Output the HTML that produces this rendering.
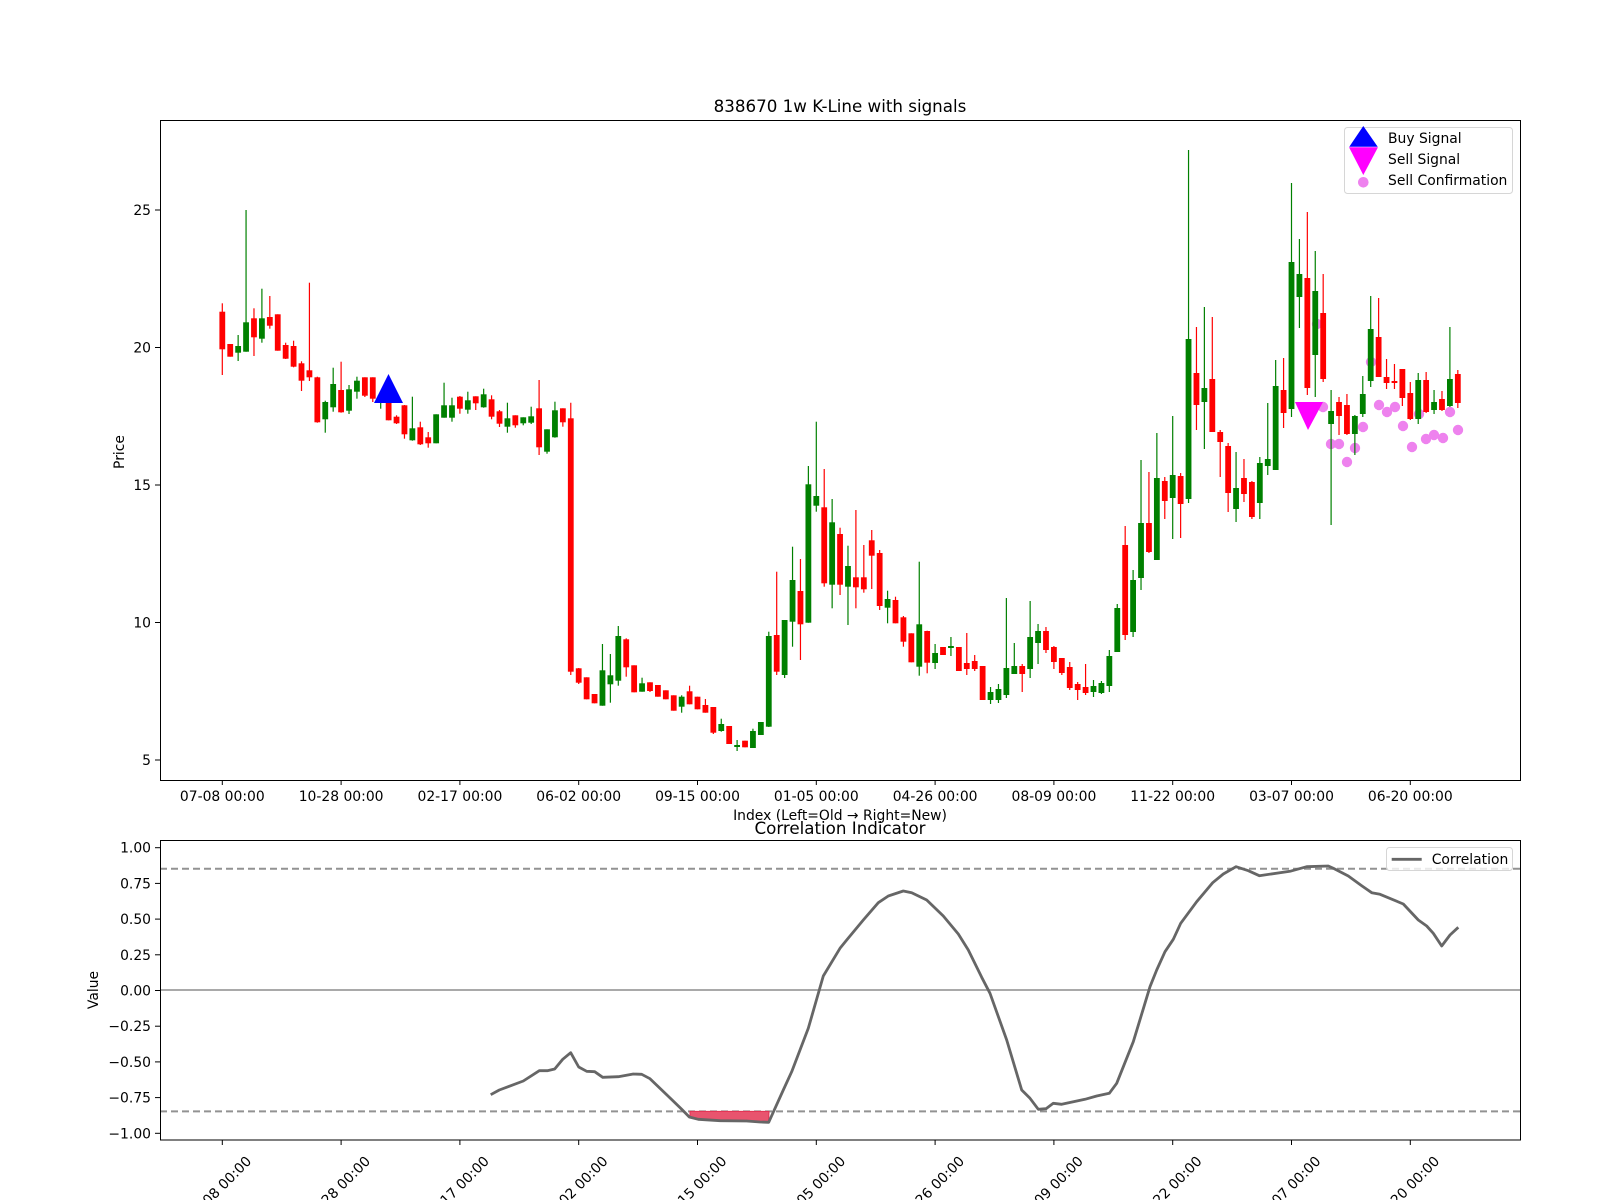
<!DOCTYPE html>
<html><head><meta charset="utf-8">
<style>
html,body{margin:0;padding:0;background:#fff;}
svg{display:block;}
text{font-family:"DejaVu Sans","Liberation Sans",sans-serif;fill:#000;}
</style></head>
<body>
<svg id="s" width="1600" height="1200" viewBox="0 0 1600 1200" xmlns="http://www.w3.org/2000/svg">
<rect width="1600" height="1200" fill="#fff"/>
<g id="conf" fill="#ee82ee"></g>
<g id="candles"></g>
<!-- Buy signal -->
<polygon points="388.5,374 374,403 403,403" fill="#0000ff"/>
<!-- Sell signal -->
<polygon points="1295,402 1323,402 1308,430" fill="#ff00ff"/>
<!-- top axes frame -->
<rect x="160.5" y="120.5" width="1360" height="660" fill="none" stroke="#000" stroke-width="1"/>
<g id="ticks1"></g>
<text x="840" y="112" font-size="16.7" text-anchor="middle">838670 1w K-Line with signals</text>
<text transform="translate(124,452) rotate(-90)" font-size="13.9" text-anchor="middle">Price</text>
<text x="840" y="820" font-size="13.9" text-anchor="middle">Index (Left=Old → Right=New)</text>
<!-- legend top -->
<rect x="1344.5" y="127.5" width="168" height="66" rx="3" fill="#fff" fill-opacity="0.8" stroke="#d6d6d6"/>
<polygon points="1363.3,126 1349.3,146.7 1377.7,146.7" fill="#0000ff"/>
<polygon points="1349,147.3 1378,147.3 1363.3,175" fill="#ff00ff"/>
<circle cx="1363.3" cy="182.3" r="5.3" fill="#ee82ee"/>
<text x="1388" y="143" font-size="13.9">Buy Signal</text>
<text x="1388" y="164" font-size="13.9">Sell Signal</text>
<text x="1388" y="185" font-size="13.9">Sell Confirmation</text>

<!-- bottom axes -->
<line x1="160" y1="990" x2="1520" y2="990" stroke="#a9a9a9" stroke-width="2"/>
<line x1="160" y1="868.7" x2="1520" y2="868.7" stroke="#808080" stroke-width="2" stroke-dasharray="7,4" opacity="0.85"/>
<line x1="160" y1="1111.4" x2="1520" y2="1111.4" stroke="#808080" stroke-width="2" stroke-dasharray="7,4" opacity="0.85"/>
<path id="fillred" fill="#e8546e" stroke="#e23152" stroke-width="1"/>
<polyline id="corr" fill="none" stroke="#666" stroke-width="2.8" stroke-linejoin="round"/>
<rect x="160.5" y="840.5" width="1360" height="299.5" fill="none" stroke="#000" stroke-width="1"/>
<g id="ticks2"></g>
<text x="840" y="834" font-size="16.7" text-anchor="middle">Correlation Indicator</text>
<text transform="translate(98,990) rotate(-90)" font-size="13.9" text-anchor="middle">Value</text>
<rect x="1386.5" y="847.5" width="126" height="23" rx="3" fill="#fff" fill-opacity="0.8" stroke="#d6d6d6"/>
<line x1="1391.7" y1="859.3" x2="1421.7" y2="859.3" stroke="#666" stroke-width="2.8"/>
<text x="1431.7" y="864" font-size="13.9">Correlation</text>
</svg>
<script>
var NS="http://www.w3.org/2000/svg";
function el(t,a,p){var e=document.createElementNS(NS,t);for(var k in a)e.setAttribute(k,a[k]);if(p)p.appendChild(e);return e;}
var D=[
["R",303.3,311.7,349.3,375],["R",344,344,356.7,356.7],["G",335,346,352.7,361],["G",210,322.3,351.7,351.7],
["R",308.3,318.3,337.3,356],["G",288.7,318.3,338.7,342.7],["R",296,317,325.7,328.7],["R",314.3,314.3,350.7,350.7],
["R",342.7,345,358.7,359],["R",340.7,346,366.7,367.3],["R",361.3,363.3,380.7,391],["R",282.7,370.3,377.3,381],
["R",376.7,377.3,422.3,422.7],["G",400.7,402,419.3,432.7],["G",367.7,384,407.3,411.7],["R",361.7,390,412.3,412.7],
["G",385,389.3,410.7,414],["G",376.7,380.7,391.7,398.7],["R",377.3,377.3,395.7,397],["R",377.3,377.3,398.7,402],
["G",394,395.3,401.3,408.7],["R",395.3,395.3,420.3,420.3],["R",415.3,416.7,423.3,424],["R",405,405.3,434.3,438.7],
["G",396.7,428.3,440.3,440.7],["R",421.7,427.3,444.3,445],["R",432,437.3,443.3,447.7],["G",414.3,414.3,443.3,443.3],
["G",382.7,405.3,417.7,417.7],["G",397.7,405.3,417.7,421.7],["R",396,396.7,408.7,413.7],["G",391.7,400.3,409.7,413.7],
["R",396.3,396.3,403.3,410],["G",388.7,394.3,407.3,407.7],["R",395.3,399.3,416.7,419.3],["R",410,411.3,423.7,427],
["G",402.7,418.3,426.7,432.7],["R",415.3,415.3,425.3,427.7],["G",417.3,417.3,423.3,425.3],["G",406.7,416.3,422.7,424],
["R",380,408.3,447.3,455],["G",429.3,429.3,451.7,453.7],["G",401.7,410.3,437.3,437.7],["R",408.3,408.3,422.3,426.7],
["R",402.7,418.3,671.7,675],["R",668,668.3,682.7,684],["R",677.3,677.3,699.3,699.3],["R",694,694,703.3,703.3],
["G",644,670.3,705.7,705.7],["G",654,675.3,684.3,702.7],["G",626,636,680.7,685.7],["R",638.3,639.3,667.3,676.7],
["R",665.3,665.3,692.3,692.3],["G",677.7,683.3,691.7,691.7],["R",682.3,682.3,691,692],["R",685,685,696.7,696.7],
["R",690.3,690.3,699.3,699.3],["R",695.3,695.3,710.7,710.7],["G",695.3,696.7,706.7,712.7],["R",685.7,691.3,704.3,704.3],
["R",696.7,696.7,709.3,709.3],["R",699,705,712.7,712.7],["R",707,707,732.7,734],["G",718.7,724,731,731.7],
["R",726,726,744,744],["G",740,745,747,751],["R",740.7,740.7,747.3,747.3],["G",728.7,731,748,748],
["G",722,722,735,735],["G",631.7,636,726.7,727],["R",571.7,635,671.7,675],["G",620,620,675,678],
["G",546.7,580,621.7,646.7],["R",559,591,624.3,660],["G",466,484.3,622.7,622.7],["G",421.7,496,505.7,511.7],
["R",469,507.3,583.3,586.7],["G",499,522.3,584.7,608.3],["R",527.7,534,584.7,595],["G",545.7,566,586.7,625],
["R",510,577.3,587.3,608.3],["R",545,577.3,589.3,592.7],["R",530,540.3,555.7,589],["R",550,553,606,610],
["G",590.7,599,607.7,623.3],["R",596.7,600,623.3,623.3],["R",616,617.3,641.7,646.7],["R",633.3,633.3,662.3,662.3],
["G",561.7,624.3,666.7,675.7],["R",630.7,631,662.7,673.3],["G",644,653,663,669],["R",647,647,655,655],
["G",637,646,648,656],["R",647,647,671,671],["R",633,663,669,675],["R",655,661,669,671],
["R",666,666,700,700],["G",687,692,700,704],["G",684,689,700,703],["G",598,668,695,698],
["G",643,666,674,674],["R",664,666,674,692],["G",601,637,669,678],["G",624,631,643,664],
["R",627,631,650,653],["R",646,647,662,669],["R",658,658,673,675],["R",662,667,688,690],
["R",682,684,690,700],["R",664,687,693,695],["G",680,686,692,697],["G",681,683,693,694],
["G",650,656,686,692],["G",604,608,652,652],["R",526,545,635,640],["G",570,580,632,637],
["G",460,523,578,590],["R",472,523,552,553],["G",433,478,560,560],["R",477,481,501,519],
["G",416,475,498,539],["R",473,476,504,538],["G",150,339,499,503],["R",327,373,405,430],
["G",307,388,402,449],["R",317,379,432,432],["R",430,432,442,477],["R",443,446,493,512],
["G",452,488,509,522],["R",459,478,494,502],["R",481,482,517,519],["G",457,463,503,519],
["G",403,459,466,475],["G",360,386,470,470],["R",358,390,413,428],["G",183,262,409,417],
["G",239,274,297,328],["R",212,278,388,395],["G",251,291,355,397],["R",274,313,379,382],
["G",390,411,424,525],["R",397,402,416,435],["R",394,405,434,435],["G",415,416,434,455],
["G",376,394,414,417],["G",296,329,381,387],["R",298,337,377,377],["R",359,377,383,389],
["R",364,381,383,389],["R",369,369,398,406],["R",382,393,419,420],["G",373,380,419,424],
["R",372,380,412,413],["G",390,402,410,414],["R",391,399,410,411],["G",327,379,406,407],
["R",370,374,403,408]];
var g=document.getElementById("candles");
D.forEach(function(c,i){var x=222.3+7.92*i;var col=c[0]=="R"?"#ff0000":"#008000";
el("line",{x1:x,x2:x,y1:c[1],y2:c[4],stroke:col,"stroke-width":1.2},g);
var h=Math.max(c[3]-c[2],1.2);
el("rect",{x:x-2.9,y:c[2],width:5.8,height:h,fill:col},g);});
var C=[[1317,324],[1323,407],[1331,444],[1339,444],[1347,462],[1355,448],[1363,427],[1371,362],[1379,405],[1387,412],[1395,407],[1403,426],[1412,447],[1419,414],[1426,439],[1434,435],[1443,438],[1450,412],[1458,430]];
var cg=document.getElementById("conf");
C.forEach(function(p){el("circle",{cx:p[0],cy:p[1],r:5.2},cg);});
var t1=document.getElementById("ticks1");
var labs=["07-08 00:00","10-28 00:00","02-17 00:00","06-02 00:00","09-15 00:00","01-05 00:00","04-26 00:00","08-09 00:00","11-22 00:00","03-07 00:00","06-20 00:00"];
var t2=document.getElementById("ticks2");
labs.forEach(function(l,k){var x=222.3+118.8*k;
el("line",{x1:x,x2:x,y1:780,y2:785,stroke:"#000","stroke-width":1},t1);
var t=el("text",{x:x,y:801,"font-size":13.9,"text-anchor":"middle"},t1);t.textContent=l;
el("line",{x1:x,x2:x,y1:1140,y2:1145,stroke:"#000","stroke-width":1},t2);
var t3=el("text",{transform:"translate("+x+",1192) rotate(-45)","font-size":13.9,"text-anchor":"middle"},t2);t3.textContent=l;});
[5,10,15,20,25].forEach(function(v){var y=760-(v-5)*27.5;
el("line",{x1:155,x2:160,y1:y,y2:y,stroke:"#000","stroke-width":1},t1);
var t=el("text",{x:151,y:y+5,"font-size":13.9,"text-anchor":"end"},t1);t.textContent=v;});
[1,0.75,0.5,0.25,0,-0.25,-0.5,-0.75,-1].forEach(function(v){var y=990.5-142.8*v;
el("line",{x1:155,x2:160,y1:y,y2:y,stroke:"#000","stroke-width":1},t2);
var s=v.toFixed(2).replace("-","\u2212");
var t=el("text",{x:151,y:y+5,"font-size":13.9,"text-anchor":"end"},t2);t.textContent=s;});
var P=[[490.7,1094.7],[499.3,1090],[523.3,1081],[539.3,1070.7],[547.3,1070.7],[554.7,1069],[562.7,1059.3],[570.7,1052.7],[578.7,1067],[586.7,1071.3],[594.7,1071.7],[602.7,1077.3],[618.3,1076.7],[633.3,1074],[641.7,1074.3],[650,1078.7],[666.7,1094.7],[681.7,1109.3],[689.3,1117],[698.3,1119.3],[720,1120.7],[746.7,1121],[760,1122],[768.7,1122.3],[783.3,1090],[791.7,1071.7],[808.3,1028.3],[823.3,976],[840,948.3],[846.7,940],[863.3,920],[878.3,902.7],[888.3,896],[903.3,891],[911.7,892.7],[926.7,900],[943.3,916],[958.3,934],[968.3,950],[981.7,977.3],[990,993.3],[1006.7,1040],[1021.7,1090],[1030,1098.3],[1038.3,1109.3],[1046,1108.7],[1053.3,1103.3],[1061.7,1104.3],[1085,1099.3],[1096.7,1096],[1109.3,1093.3],[1116.7,1083.3],[1133.3,1041.7],[1150,986.7],[1156.7,970],[1165,951.7],[1173.3,939.3],[1180.7,923.3],[1196.7,901.7],[1212.7,882.7],[1223.3,874],[1236,866.7],[1248.3,870.7],[1259.3,875.7],[1290,871.3],[1306.7,866.7],[1328.3,866],[1333.3,868.3],[1348.3,876],[1361.7,885.7],[1371.7,892.7],[1380,894.3],[1403.3,904],[1418.3,920],[1426.7,926],[1433.3,933.3],[1441.7,946],[1450,935],[1458.3,927.3]];
document.getElementById("corr").setAttribute("points",P.map(function(p){return p.join(",")}).join(" "));
document.getElementById("fillred").setAttribute("d","M690,1111.4 L690,1117.2 L698.3,1119.3 L720,1120.7 L746.7,1121 L760,1122 L768.7,1122.3 L769,1111.4 Z");
</script>
</body></html>
